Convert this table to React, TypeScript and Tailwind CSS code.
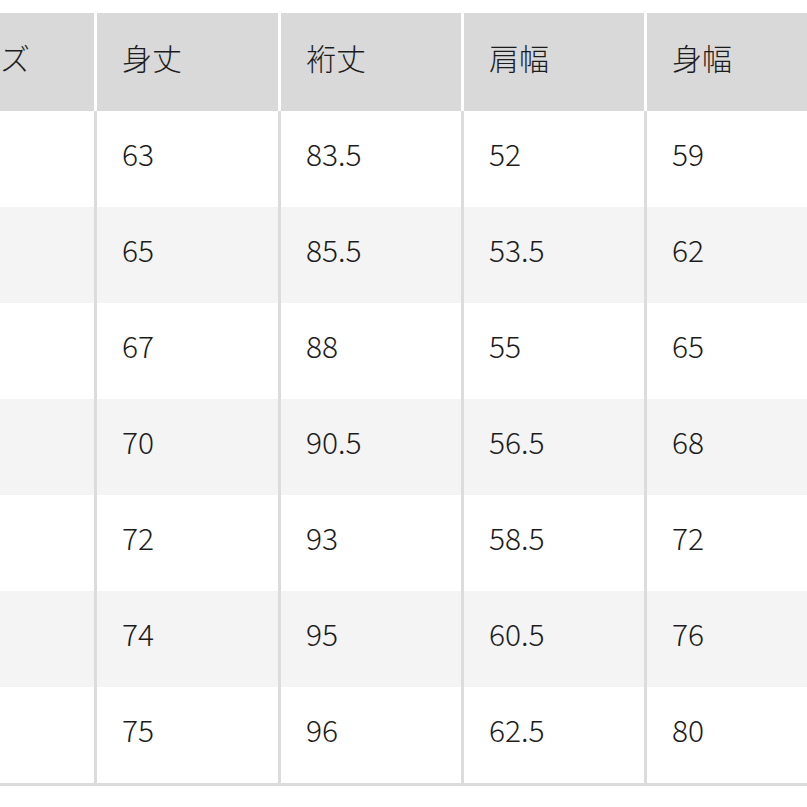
import React from "react";

const rows: string[][] = [
  ["S", "63", "83.5", "52", "59"],
  ["M", "65", "85.5", "53.5", "62"],
  ["L", "67", "88", "55", "65"],
  ["XL", "70", "90.5", "56.5", "68"],
  ["XXL", "72", "93", "58.5", "72"],
  ["3XL", "74", "95", "60.5", "76"],
  ["4XL", "75", "96", "62.5", "80"],
];

const headers = ["サイズ", "身丈", "裄丈", "肩幅", "身幅"];

export default function App() {
  return (
    <div
      className="w-[807px] h-[807px] overflow-hidden bg-white text-[#1c1c1c] font-light"
      style={{ fontFamily: '"Noto Sans CJK JP", "Noto Sans", sans-serif' }}
    >
      <div className="pt-[13px] ml-[-89px]">
        <div className="grid grid-cols-[183px_184px_183px_183px_1fr] h-[98px] bg-[#d9d9d9] text-[30px]">
          {headers.map((h, i) => (
            <div
              key={h}
              className={
                i === 0
                  ? "flex items-center pl-[30px] pb-[9px] whitespace-nowrap"
                  : "flex items-center pl-[25px] pb-[9px] border-l-[3px] border-white"
              }
            >
              {h}
            </div>
          ))}
        </div>
        {rows.map((r, ri) => (
          <div
            key={ri}
            className={
              ri % 2 === 1
                ? "grid grid-cols-[183px_184px_183px_183px_1fr] h-[96px] bg-[#f4f4f4] text-[30px]"
                : "grid grid-cols-[183px_184px_183px_183px_1fr] h-[96px] bg-white text-[30px]"
            }
          >
            {r.map((c, ci) => (
              <div
                key={ci}
                className={
                  ci === 0
                    ? "flex items-center pl-[30px] pb-[12px]"
                    : "flex items-center pl-[25px] pb-[12px] border-l-[3px] border-[#dcdcdc]"
                }
              >
                {ci === 0 ? "" : c}
              </div>
            ))}
          </div>
        ))}
        <div className="h-[3px] bg-[#dcdcdc]" />
      </div>
    </div>
  );
}
